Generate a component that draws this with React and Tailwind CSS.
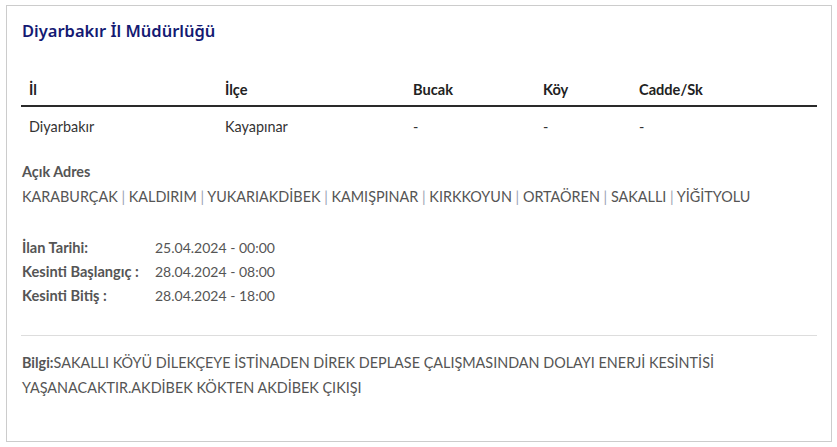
import React from 'react';

const towns = ['KARABURÇAK', 'KALDIRIM', 'YUKARIAKDİBEK', 'KAMIŞPINAR', 'KIRKKOYUN', 'ORTAÖREN', 'SAKALLI', 'YİĞİTYOLU'];

const dates = [
  ['İlan Tarihi:', '25.04.2024 - 00:00'],
  ['Kesinti Başlangıç :', '28.04.2024 - 08:00'],
  ['Kesinti Bitiş :', '28.04.2024 - 18:00'],
];

const cols = ['İl', 'İlçe', 'Bucak', 'Köy', 'Cadde/Sk'];
const vals = ['Diyarbakır', 'Kayapınar', '-', '-', '-'];

const App = () => {
  return (
    <div className="w-[837px] h-[447px] bg-white pt-[5px] pl-[6px]" style={{ fontFamily: 'Lato, "Liberation Sans", sans-serif' }}>
      <div className="w-[826px] h-[437px] border border-[#cccccc] px-[14px] pt-[14px]">
        <h1 className="h-[22px] leading-[22px] pl-[1px] text-[16.5px] font-semibold text-[#141a73]" style={{ fontFamily: '"Noto Sans", sans-serif' }}>
          Diyarbakır İl Müdürlüğü
        </h1>

        <div className="mt-[33px] w-[796px]">
          <div className="grid grid-cols-[196px_188px_130px_96px_1fr] h-[32px] border-b-2 border-[#2a2a2a] text-[14.6px] font-bold text-[#222]">
            {cols.map((c) => (
              <div key={c} className="pl-2 leading-[30px]">{c}</div>
            ))}
          </div>
          <div className="grid grid-cols-[196px_188px_130px_96px_1fr] h-[40px] text-[14.4px] text-[#333]">
            {vals.map((v, i) => (
              <div key={i} className="pl-2 leading-[40px]">{v}</div>
            ))}
          </div>
        </div>

        <div className="mt-[15px] pl-[1px] text-[14.4px] text-[#555]">
          <div className="leading-[20px] font-bold text-[14.4px]">Açık Adres</div>
          <div className="leading-[30px]">
            {towns.map((t, i) => (
              <span key={t}>
                {t}
                {i < towns.length - 1 && <span className="text-[#9aa3b5]"> | </span>}
              </span>
            ))}
          </div>

          <div className="mt-[24px] text-[#555]">
            {dates.map(([l, v]) => (
              <div key={l} className="flex leading-[24px]">
                <span className="w-[133px] font-bold text-[14.6px]">{l}</span>
                <span className="text-[14px]">{v}</span>
              </div>
            ))}
          </div>
        </div>

        <div className="mt-[27px] w-[796px] border-t border-[#dddddd]" />

        <p className="mt-[14px] w-[796px] pl-[1px] text-[14.4px] leading-[25px] text-[#555]">
          <span className="font-bold">Bilgi:</span>SAKALLI KÖYÜ DİLEKÇEYE İSTİNADEN DİREK DEPLASE ÇALIŞMASINDAN DOLAYI ENERJİ KESİNTİSİ YAŞANACAKTIR.AKDİBEK KÖKTEN AKDİBEK ÇIKIŞI
        </p>
      </div>
    </div>
  );
};

export default App;
